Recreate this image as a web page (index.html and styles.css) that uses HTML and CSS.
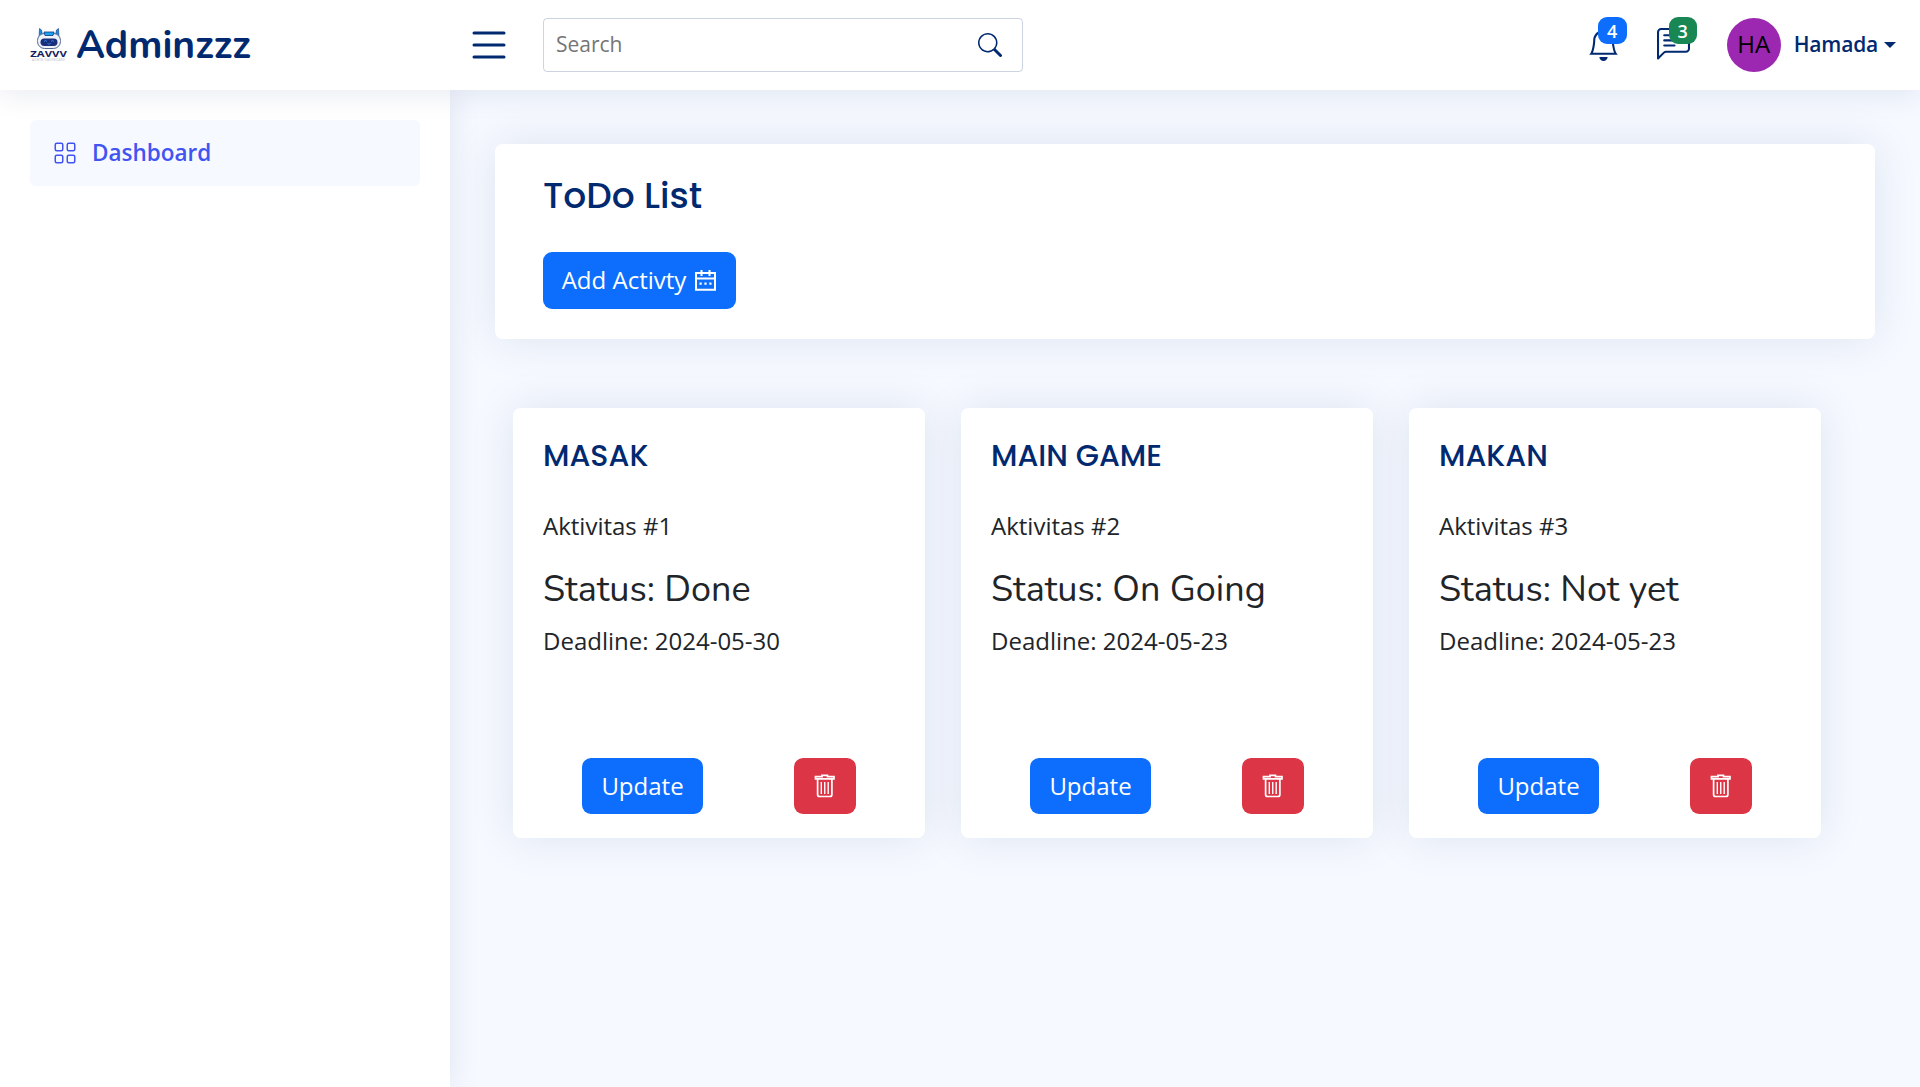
FILE: index.html
```html
<!DOCTYPE html>
<html lang="id">
<head>
<meta charset="utf-8">
<title>Adminzzz - ToDo List</title>
<link rel="stylesheet" href="styles.css">
</head>
<body>
<svg class="sprite" aria-hidden="true">
  <symbol id="trash" viewBox="0 0 22 24">
    <path d="M1.500 4.800V2.700H8V1.400H13.500V2.700H20V4.800Z M3.600 5.500V20.500Q3.600 22.500 5.600 22.500H15.900Q17.900 22.500 17.900 20.500V5.500" fill="none" stroke="currentColor" stroke-width="1.700"/>
    <path d="M7.300 8V20 M10.750 8V20 M14.200 8V20" fill="none" stroke="currentColor" stroke-width="1.400"/>
  </symbol>
</svg>
<header class="header">
  <a class="logo">
    <svg class="logo-mark" viewBox="0 0 38 36">
      <path d="M9 11 9.500 1.500 11.500 3 12.500 8ZM29 11 28.500 1.500 26.500 3 25.500 8Z" fill="#1593e0" stroke="#12337c" stroke-width=".6"/>
      <rect x="7.500" y="6.500" width="23" height="15" rx="7" fill="#eef3fa" stroke="#54688f" stroke-width="1"/>
      <path d="M14 5H24L23 8.500H15Z" fill="#16a4f2" stroke="#12337c" stroke-width=".8"/>
      <rect x="10.500" y="11.500" width="17" height="7.500" rx="3.700" fill="#1c2f7c"/>
      <path d="M14 14.500q1.500-2 3 0M21 14.500q1.500-2 3 0M17.500 16.500q1.500 1.500 3 0" fill="none" stroke="#2a86e5" stroke-width="1"/>
      <text x=".3" y="29.500" class="logo-word" textLength="36.500" lengthAdjust="spacingAndGlyphs">ZAVVV</text>
      <text x="2" y="34" class="logo-sub" textLength="33">ADMIN DASHBOARD</text>
    </svg>
    <span class="logo-text">Adminzzz</span>
  </a>
  <svg class="toggle" viewBox="0 0 16 16" fill="currentColor"><path fill-rule="evenodd" d="M2.500 12a.5.5 0 0 1 .5-.5h10a.5.5 0 0 1 0 1H3a.5.5 0 0 1-.5-.5m0-4a.5.5 0 0 1 .5-.5h10a.5.5 0 0 1 0 1H3a.5.5 0 0 1-.5-.5m0-4a.5.5 0 0 1 .5-.5h10a.5.5 0 0 1 0 1H3a.5.5 0 0 1-.5-.5"/></svg>
  <div class="search">
    <span>Search</span>
    <svg viewBox="0 0 16 16" fill="currentColor"><path d="M11.742 10.344a6.500 6.500 0 1 0-1.397 1.398h-.001q.044.06.098.115l3.850 3.850a1 1 0 0 0 1.415-1.414l-3.850-3.850a1 1 0 0 0-.115-.1zM12 6.500a5.500 5.500 0 1 1-11 0 5.500 5.500 0 0 1 11 0"/></svg>
  </div>
  <nav class="tools">
    <a class="tool bell">
      <svg viewBox="0 0 16 16" fill="currentColor"><path d="M8 16a2 2 0 0 0 2-2H6a2 2 0 0 0 2 2M8 1.918l-.797.161A4 4 0 0 0 4 6c0 .628-.134 2.197-.459 3.742-.16.767-.376 1.566-.663 2.258h10.244c-.287-.692-.502-1.490-.663-2.258C12.134 8.197 12 6.628 12 6a4 4 0 0 0-3.203-3.920zM14.220 12c.223.447.481.801.780 1H1c.299-.199.557-.553.780-1C2.680 10.200 3 6.880 3 6c0-2.420 1.720-4.440 4.005-4.901a1 1 0 1 1 1.990 0A5 5 0 0 1 13 6c0 .880.320 4.200 1.220 6"/></svg>
      <span class="badge blue">4</span>
    </a>
    <a class="tool chat">
      <svg viewBox="0 0 16 16" fill="currentColor"><path d="M14 1a1 1 0 0 1 1 1v8a1 1 0 0 1-1 1H4.414A2 2 0 0 0 3 11.586l-2 2V2a1 1 0 0 1 1-1zM2 0a2 2 0 0 0-2 2v12.793a.5.5 0 0 0 .854.353l2.853-2.853A1 1 0 0 1 4.414 12H14a2 2 0 0 0 2-2V2a2 2 0 0 0-2-2z"/><path d="M3 3.500a.5.5 0 0 1 .5-.5h9a.5.5 0 0 1 0 1h-9a.5.5 0 0 1-.5-.5M3 6a.5.5 0 0 1 .5-.5h9a.5.5 0 0 1 0 1h-9A.5.5 0 0 1 3 6m0 2.500a.5.5 0 0 1 .5-.5h5a.5.5 0 0 1 0 1h-5a.5.5 0 0 1-.5-.5"/></svg>
      <span class="badge green">3</span>
    </a>
    <span class="avatar">HA</span>
    <span class="user">Hamada</span>
    <span class="caret"></span>
  </nav>
</header>
<div class="body">
  <aside class="sidebar">
    <a class="nav-link">
      <svg viewBox="0 0 16 16" fill="currentColor"><path d="M1 2.500A1.500 1.500 0 0 1 2.500 1h3A1.500 1.500 0 0 1 7 2.500v3A1.500 1.500 0 0 1 5.500 7h-3A1.500 1.500 0 0 1 1 5.500zM2.500 2a.5.5 0 0 0-.5.5v3a.5.5 0 0 0 .5.5h3a.5.5 0 0 0 .5-.5v-3a.5.5 0 0 0-.5-.5zm6.500.5A1.500 1.500 0 0 1 10.500 1h3A1.500 1.500 0 0 1 15 2.500v3A1.500 1.500 0 0 1 13.500 7h-3A1.500 1.500 0 0 1 9 5.500zm1.500-.5a.5.5 0 0 0-.5.5v3a.5.5 0 0 0 .5.5h3a.5.5 0 0 0 .5-.5v-3a.5.5 0 0 0-.5-.5zM1 10.500A1.500 1.500 0 0 1 2.500 9h3A1.500 1.500 0 0 1 7 10.500v3A1.500 1.500 0 0 1 5.500 15h-3A1.500 1.500 0 0 1 1 13.500zm1.500-.5a.5.5 0 0 0-.5.5v3a.5.5 0 0 0 .5.5h3a.5.5 0 0 0 .5-.5v-3a.5.5 0 0 0-.5-.5zm6.500.5A1.500 1.500 0 0 1 10.500 9h3a1.500 1.500 0 0 1 1.500 1.500v3a1.500 1.500 0 0 1-1.500 1.500h-3A1.500 1.500 0 0 1 9 13.500zm1.500-.5a.5.5 0 0 0-.5.5v3a.5.5 0 0 0 .5.5h3a.5.5 0 0 0 .5-.5v-3a.5.5 0 0 0-.5-.5z"/></svg>
      <span>Dashboard</span>
    </a>
  </aside>
  <main class="main">
    <section class="panel">
      <h1 class="panel-title">ToDo List</h1>
      <button class="btn add"><span>Add Activty</span>
        <svg viewBox="0 0 21 21"><path d="M1 3H20V19.800H1ZM1 8.500H20M6.500 0V6M14.500 0V6" fill="none" stroke="currentColor" stroke-width="2"/><path d="M4.500 12.500h2.200v2.200H4.500zM9.400 12.500h2.200v2.200H9.400zM14.300 12.500h2.200v2.200h-2.200z" fill="currentColor"/></svg>
      </button>
    </section>
    <section class="cards">
      <article class="card">
        <h2 class="card-title">MASAK</h2>
        <p class="line">Aktivitas #1</p>
        <h3 class="status">Status: Done</h3>
        <p class="line">Deadline: 2024-05-30</p>
        <div class="actions"><button class="btn">Update</button><button class="btn danger"><svg><use href="#trash"/></svg></button></div>
      </article>
      <article class="card">
        <h2 class="card-title">MAIN GAME</h2>
        <p class="line">Aktivitas #2</p>
        <h3 class="status">Status: On Going</h3>
        <p class="line">Deadline: 2024-05-23</p>
        <div class="actions"><button class="btn">Update</button><button class="btn danger"><svg><use href="#trash"/></svg></button></div>
      </article>
      <article class="card">
        <h2 class="card-title">MAKAN</h2>
        <p class="line">Aktivitas #3</p>
        <h3 class="status">Status: Not yet</h3>
        <p class="line">Deadline: 2024-05-23</p>
        <div class="actions"><button class="btn">Update</button><button class="btn danger"><svg><use href="#trash"/></svg></button></div>
      </article>
    </section>
  </main>
</div>
</body>
</html>
```
FILE: styles.css
```css
* { box-sizing: border-box; }
body {
  margin: 0;
  height: 1087px;
  display: flex;
  flex-direction: column;
  overflow: hidden;
  background: #f6f9ff;
  color: #212529;
  font: 24px/36px "Open Sans", sans-serif;
}
h1, h2, h3, p { margin: 0; }
svg { display: block; flex: none; }
.sprite { position: absolute; width: 0; height: 0; }

.header {
  position: relative;
  z-index: 2;
  flex: none;
  height: 90px;
  display: flex;
  align-items: center;
  padding: 0 24px 0 30px;
  background: #fff;
  color: #012970;
  box-shadow: 0 3px 30px rgba(1, 41, 112, .1);
}
.logo { display: flex; align-items: center; width: 436px; }
.logo-mark { width: 38px; height: 36px; margin-right: 8px; }
.logo-word { font: 700 9.500px "Open Sans", sans-serif; fill: #171c5c; }
.logo-sub { font: 3px "Open Sans", sans-serif; fill: #b4b8c8; }
.logo-text { padding-top: 2px; font: 700 39px/48px "Nunito", "Lato", sans-serif; }
.toggle { width: 48px; height: 48px; margin-left: -1px; }
.search {
  width: 480px;
  height: 54px;
  margin-left: 30px;
  padding: 0 20px 0 12px;
  display: flex;
  align-items: center;
  justify-content: space-between;
  border: 1px solid rgba(1, 41, 112, .2);
  border-radius: 4px;
  font-size: 21px;
}
.search span { color: #757575; padding-bottom: 2px; }
.search svg { width: 24px; height: 24px; color: #012970; }
.tools { display: flex; align-items: center; margin-left: auto; }
.tool { position: relative; }
.tool svg { width: 33px; height: 33px; }
.bell { margin-right: 37px; padding-bottom: 2px; }
.chat { margin-right: 37px; padding-bottom: 2px; }
.badge {
  position: absolute;
  top: -11px;
  height: 27px;
  border-radius: 9px;
  color: #fff;
  font-size: 18px;
  font-weight: 600;
  line-height: 28px;
  text-align: center;
}
.blue { left: 11px; width: 29px; background: #0d6efd; }
.green { left: 12px; width: 28px; background: #198754; }
.avatar {
  width: 54px;
  height: 54px;
  border-radius: 50%;
  background: #9c27b0;
  color: #000;
  line-height: 52px;
  text-align: center;
}
.user { margin-left: 13px; padding-bottom: 2px; font-size: 21px; font-weight: 600; letter-spacing: -.2px; }
.caret { margin-left: 6px; border: 6px solid transparent; border-top-color: currentColor; border-bottom: 0; }

.body { flex: 1; display: flex; min-height: 0; }
.sidebar {
  width: 450px;
  flex: none;
  padding: 30px;
  background: #fff;
  box-shadow: 0 0 30px rgba(1, 41, 112, .1);
}
.nav-link {
  display: flex;
  align-items: center;
  height: 66px;
  padding: 0 24px;
  border-radius: 6px;
  background: #f6f9ff;
  color: #4154f1;
  font-size: 22.500px;
  font-weight: 600;
}
.nav-link svg { width: 24px; height: 24px; margin: 0 15px 0 -1px; }
.main { flex: 1; padding: 54px 45px 0; }
.panel, .card {
  background: #fff;
  border-radius: 7.500px;
  box-shadow: 0 0 45px rgba(1, 41, 112, .1);
}
.panel { height: 195px; padding: 30px 48px; }
.panel-title { font: 500 36px/43px "Poppins", "Inter", sans-serif; color: #012970; }
.btn {
  display: flex;
  align-items: center;
  justify-content: center;
  height: 56px;
  padding: 0 19px;
  border: 0;
  border-radius: 9px;
  background: #0d6efd;
  color: #fff;
  font: 24px/36px "Open Sans", sans-serif;
}
.add { width: 193px; height: 57px; margin-top: 35px; gap: 9px; padding: 0 20px 0 19px; white-space: nowrap; }
.add span { padding-bottom: 2px; }
.add svg { width: 21px; height: 21px; }
.cards { display: grid; grid-template-columns: repeat(3, 412px); gap: 36px; padding: 69px 18px 0; }
.card { height: 430px; padding: 30px; }
.card-title { font: 500 30px/36px "Poppins", "Inter", sans-serif; color: #012970; margin-bottom: 34px; }
.status { font: 400 36px/43px "Nunito", "Lato", sans-serif; margin: 24px 0 12px; }
.actions { display: flex; justify-content: space-between; margin: 99px 39px 0; }
.actions .btn { width: 121px; }
.actions .danger { width: 62px; background: #dc3545; }
.danger svg { width: 22px; height: 24px; }
```
